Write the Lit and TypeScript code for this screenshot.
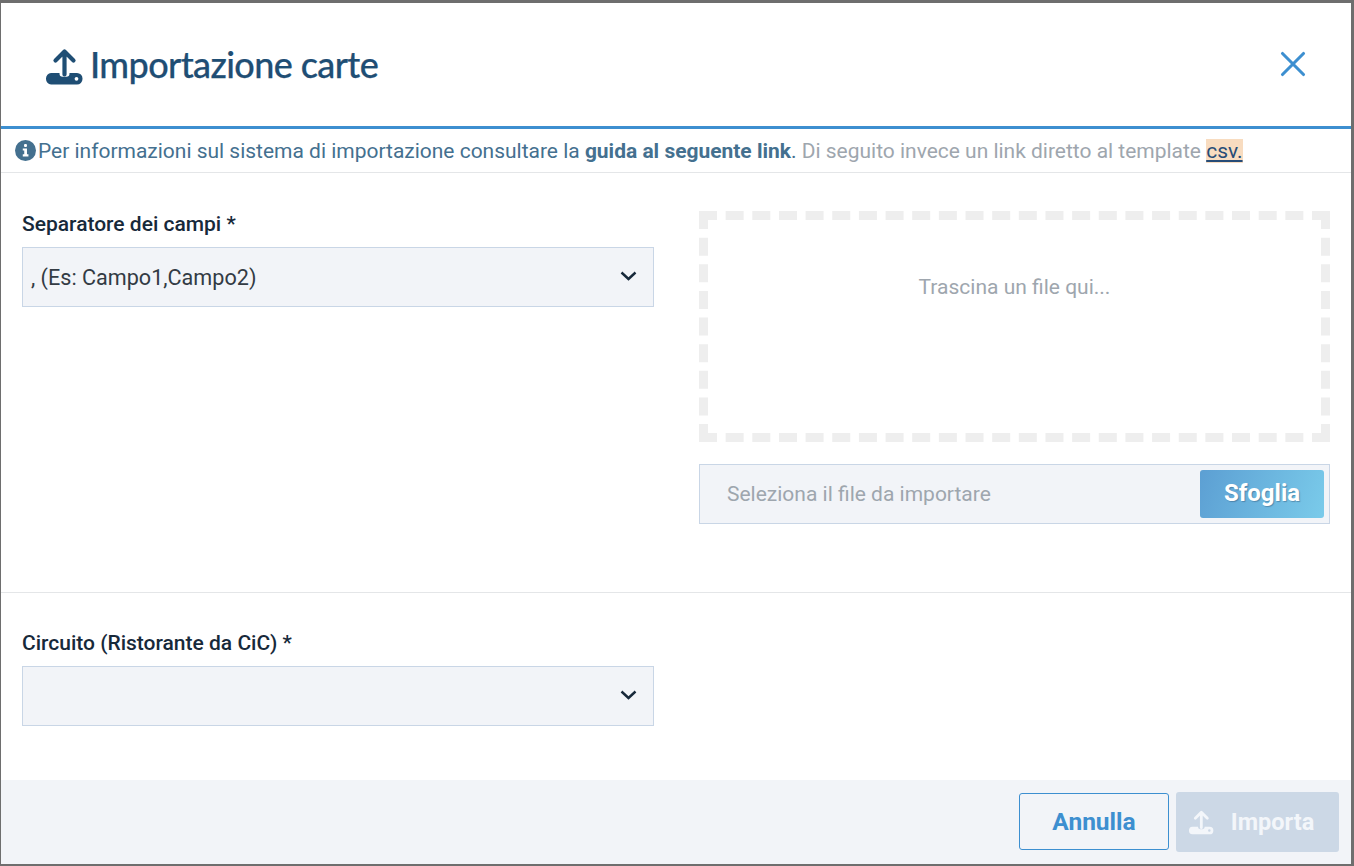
import { LitElement, html, css, svg } from "lit";
import { customElement } from "lit/decorators.js";

const uploadIcon = (cls: string) => html`<svg class=${cls} viewBox="0 0 36 36" aria-hidden="true">
  <path fill-rule="evenodd" fill="currentColor" d="M5 25 H13.5 V25.5 A3.2 3.2 0 0 0 16.7 28.7 H20.3 A3.2 3.2 0 0 0 23.5 25.5 V25 H31 A5.5 5.5 0 0 1 36.5 30.5 V31 A5.5 5.5 0 0 1 31 36.5 H5 A5.5 5.5 0 0 1 0 31 V30.5 A5.5 5.5 0 0 1 5 25 Z M30.5 28.9 A1.9 1.9 0 1 0 30.5 32.7 A1.9 1.9 0 1 0 30.5 28.9 Z"></path>
  <path d="M18.5 26.5 V3.5 M9.5 12.5 L18.5 3.5 L27.5 12.5" fill="none" stroke="currentColor" stroke-width="4.2" stroke-linecap="round" stroke-linejoin="round"></path>
</svg>`;

const chevron = svg`<path d="M1.5 1.5 L8.5 8 L15.5 1.5" fill="none" stroke="currentColor" stroke-width="2.4"></path>`;

@customElement("app-root")
export class AppRoot extends LitElement {
  static styles = css`
    :host {
      display: block;
      width: 1354px;
      height: 866px;
      background: #6e6e6e;
      font-family: Roboto, "Liberation Sans", sans-serif;
      overflow: hidden;
    }
    * { box-sizing: border-box; }
    .modal {
      margin: 3px 3px 0 1px;
      height: 861px;
      width: 1350px;
      background: #fff;
      display: flex;
      flex-direction: column;
    }
    .head {
      height: 123px;
      flex: none;
      display: flex;
      align-items: center;
      padding: 0 45px 0 45px;
    }
    .title-icon { width: 36px; height: 36px; color: #1f4e74; margin-right: 8px; margin-top: 2px; flex: none; overflow: visible; }
    h1 {
      margin: -2px 0 0;
      font-family: Lato, sans-serif;
      font-weight: 500;
      font-size: 36px;
      letter-spacing: -0.6px;
      -webkit-text-stroke: 0.25px #1f4e74;
      color: #1f4e74;
      flex: 1;
    }
    .close { width: 26px; height: 26px; color: #3d8fd0; margin-top: -2px; }
    .rule { height: 3px; background: #3d8fd0; flex: none; }
    .info {
      height: 44px;
      flex: none;
      border-bottom: 1px solid #e4e6e8;
      display: flex;
      align-items: center;
      padding-left: 14px;
      font-size: 20.98px;
      white-space: nowrap;
      color: #44708f;
    }
    .info-icon { width: 21px; height: 21px; margin-right: 2px; flex: none; }
    .info b { font-weight: 700; }
    .info .g { color: #9ea6ae; }
    .info .csv {
      color: #274c77;
      background: #f8dcc0;
      text-decoration: underline;
      text-decoration-thickness: 2px;
      text-underline-offset: 2px;
    }
    .top {
      height: 420px;
      flex: none;
      border-bottom: 1px solid #e4e6e8;
      display: grid;
      grid-template-columns: 632px 631px;
      column-gap: 45px;
      padding: 38px 0 0 21px;
      align-content: start;
    }
    label {
      display: block;
      font-size: 21px;
      font-weight: 500;
      line-height: 26px;
      color: #17293a;
      margin: 0 0 10px;
    }
    .select {
      height: 60px;
      background: #f2f4f8;
      border: 1px solid #c9d6e6;
      display: flex;
      align-items: center;
      justify-content: space-between;
      padding: 0 16px 0 8px;
      font-size: 21.6px;
      color: #333b44;
    }
    .select svg { width: 17px; height: 10px; color: #17293a; margin-top: -2px; }
    .drop-col { display: flex; flex-direction: column; }
    .drop {
      height: 231px;
      border: 9px dashed #eeeeee;
      display: flex;
      justify-content: center;
      padding-top: 55px;
      font-size: 21px;
      color: #9ea6ae;
      margin-bottom: 22px;
    }
    .file {
      height: 60px;
      background: #f2f4f8;
      border: 1px solid #c9d6e6;
      display: flex;
      align-items: center;
      justify-content: space-between;
      padding: 0 5px 0 27px;
      font-size: 21px;
      color: #9ea6ae;
    }
    .browse {
      width: 124px;
      height: 48px;
      border-radius: 3px;
      background: linear-gradient(110deg, #5c9fd3, #7acbea);
      color: #fff;
      font-size: 24px;
      font-weight: 700;
      padding-bottom: 3px;
      display: flex;
      align-items: center;
      justify-content: center;
      text-shadow: 1px 1px 1px rgba(40, 70, 100, 0.4);
    }
    .bottom {
      flex: 1;
      padding: 37px 0 0 21px;
    }
    .bottom .field { width: 632px; }
    .foot {
      height: 84px;
      flex: none;
      background: #f2f4f8;
      display: flex;
      justify-content: flex-end;
      align-items: flex-start;
      gap: 7px;
      padding: 12px 12px 0 0;
    }
    .btn {
      display: flex;
      align-items: center;
      justify-content: center;
      font-weight: 700;
      border-radius: 3px;
    }
    .cancel {
      width: 150px;
      height: 57px;
      margin-top: 1px;
      border: 1px solid #3d8fd0;
      color: #3d8fd0;
      font-size: 24.5px;
      padding-bottom: 1px;
    }
    .import {
      width: 163px;
      height: 60px;
      background: #ccd8e6;
      color: #f3f6fa;
      font-size: 23.5px;
    }
    .btn-icon { width: 24px; height: 24px; margin-right: 18px; margin-left: -12px; overflow: visible; }
  `;

  render() {
    return html`<div class="modal">
      <div class="head">
        ${uploadIcon("title-icon")}
        <h1>Importazione carte</h1>
        <svg class="close" viewBox="0 0 26 26" aria-hidden="true"><path d="M2.5 2.5 L23.5 23.5 M23.5 2.5 L2.5 23.5" fill="none" stroke="currentColor" stroke-width="3.1" stroke-linecap="round"></path></svg>
      </div>
      <div class="rule"></div>
      <div class="info">
        <svg class="info-icon" viewBox="0 0 20 20" aria-hidden="true">
          <circle cx="10" cy="10" r="10" fill="#44708f"></circle>
          <rect x="8.6" y="3.8" width="2.8" height="2.8" rx="1" fill="#fff"></rect>
          <path d="M7.4 8 H11.4 V13.6 H12.8 V15.6 H7.4 V13.6 H8.8 V10 H7.4 Z" fill="#fff"></path>
        </svg>
        <span>Per informazioni sul sistema di importazione consultare la <b>guida al seguente link</b>. <span class="g">Di seguito invece un link diretto al template</span> <span class="csv">csv.</span></span>
      </div>
      <div class="top">
        <div class="field">
          <label>Separatore dei campi *</label>
          <div class="select"><span>, (Es: Campo1,Campo2)</span><svg viewBox="0 0 17 10" aria-hidden="true">${chevron}</svg></div>
        </div>
        <div class="drop-col">
          <div class="drop">Trascina un file qui...</div>
          <div class="file"><span>Seleziona il file da importare</span><div class="browse">Sfoglia</div></div>
        </div>
      </div>
      <div class="bottom">
        <div class="field">
          <label>Circuito (Ristorante da CiC) *</label>
          <div class="select"><span></span><svg viewBox="0 0 17 10" aria-hidden="true">${chevron}</svg></div>
        </div>
      </div>
      <div class="foot">
        <div class="btn cancel">Annulla</div>
        <div class="btn import">${uploadIcon("btn-icon")}Importa</div>
      </div>
    </div>`;
  }
}
